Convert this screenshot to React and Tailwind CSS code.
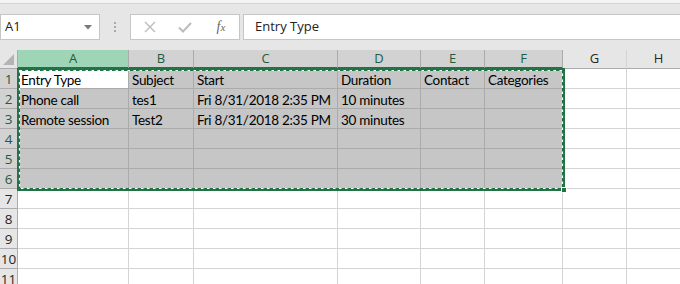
import React from 'react';

const cols = [
  { key: 'A', w: 'w-[111px]', sel: true },
  { key: 'B', w: 'w-[65px]', sel: true },
  { key: 'C', w: 'w-[144px]', sel: true },
  { key: 'D', w: 'w-[83px]', sel: true },
  { key: 'E', w: 'w-[64px]', sel: true },
  { key: 'F', w: 'w-[78px]', sel: true },
  { key: 'G', w: 'w-[64px]', sel: false },
  { key: 'H', w: 'w-[64px]', sel: false },
];

const data = [
  ['Entry Type', 'Subject', 'Start', 'Duration', 'Contact', 'Categories'],
  ['Phone call', 'tes1', 'Fri 8/31/2018 2:35 PM', '10 minutes', '', ''],
  ['Remote session', 'Test2', 'Fri 8/31/2018 2:35 PM', '30 minutes', '', ''],
  ['', '', '', '', '', ''],
  ['', '', '', '', '', ''],
  ['', '', '', '', '', ''],
];

const rowNums = [1, 2, 3, 4, 5, 6, 7, 8, 9, 10, 11];

const App = () => {
  return (
    <div className="relative w-[680px] h-[284px] overflow-hidden bg-white" style={{ fontFamily: '"Lato", sans-serif' }}>
      {/* Formula bar area */}
      <div className="h-[50px] bg-[#e6e6e6] relative" style={{ fontFamily: '"Open Sans", sans-serif' }}>
        <div className="h-[4px] bg-[#f3f3f3] border-b border-[#d4d4d4]" />
        <div className="flex items-center mt-[10px] h-[26px]">
          {/* Name box */}
          <div className="w-[100px] shrink-0 h-[26px] bg-white border border-[#c6c6c6] flex items-center justify-between pl-[4px] pr-[7px]">
            <span className="text-[13px] text-[#222]">A1</span>
            <svg width="8" height="5" viewBox="0 0 8 5">
              <path d="M0 0 L8 0 L4 4.5 Z" fill="#7a7a7a" />
            </svg>
          </div>
          {/* Separator dots */}
          <div className="w-[30px] shrink-0 flex flex-col items-center gap-[2px]">
            <div className="w-[2px] h-[2px] bg-[#a8a8a8]" />
            <div className="w-[2px] h-[2px] bg-[#a8a8a8]" />
            <div className="w-[2px] h-[2px] bg-[#a8a8a8]" />
          </div>
          {/* Buttons */}
          <div className="w-[110px] shrink-0 h-[26px] bg-white border border-[#c6c6c6] flex items-center">
            <div className="w-[36px] flex justify-center pl-[2px]">
              <svg width="12" height="12" viewBox="0 0 12 12">
                <path d="M1 1 L11 11 M11 1 L1 11" stroke="#bcbcbc" strokeWidth="1.4" />
              </svg>
            </div>
            <div className="w-[36px] flex justify-center">
              <svg width="14" height="11" viewBox="0 0 14 11">
                <path d="M1 5.5 L5 9.5 L13 1" stroke="#bcbcbc" strokeWidth="2" fill="none" />
              </svg>
            </div>
            <div className="w-[36px] flex justify-center">
              <span className="italic text-[14px] text-[#666] leading-none" style={{ fontFamily: '"Liberation Serif", serif' }}>
                f<span className="text-[11px]">x</span>
              </span>
            </div>
          </div>
          {/* Formula box */}
          <div className="ml-[3px] flex-1 h-[26px] bg-white border border-r-0 border-[#c6c6c6] flex items-center pl-[11px]">
            <span className="text-[13px] text-[#222]">Entry Type</span>
          </div>
        </div>
      </div>

      {/* Column headers */}
      <div className="flex h-[19px]" style={{ fontFamily: '"Open Sans", sans-serif' }}>
        <div className="w-[18px] shrink-0 h-[19px] bg-[#e6e6e6] border-r border-b border-[#ababab] relative">
          <svg className="absolute right-[3px] bottom-[3px]" width="11" height="11" viewBox="0 0 11 11">
            <path d="M11 0 L11 11 L0 11 Z" fill="#b4b4b4" />
          </svg>
        </div>
        {cols.map((c) => (
          <div
            key={c.key}
            className={`${c.w} shrink-0 h-[19px] flex items-center justify-center text-[13px] border-r ${
              c.key === 'A'
                ? 'bg-[#9fd5b7] text-[#1f5c3e] border-b-2 border-r-[#ababab] border-b-[#217346]'
                : c.sel
                ? 'bg-[#d2d2d2] text-[#1f5c3e] border-b-2 border-r-[#ababab] border-b-[#217346]'
                : 'bg-[#e6e6e6] text-[#262626] border-b border-r-[#d4d4d4] border-b-[#ababab]'
            }`}
          >
            {c.key}
          </div>
        ))}
      </div>

      {/* Rows */}
      {rowNums.map((n) => {
        const inSel = n <= 6;
        return (
          <div key={n} className="flex h-[20px]">
            <div
              className={`w-[18px] shrink-0 h-[20px] flex items-center justify-center pt-[2px] text-[13.5px] border-r border-b ${
                inSel
                  ? 'bg-[#d2d2d2] text-[#1f5c3e] border-r-[#217346] border-b-[#ababab]'
                  : 'bg-[#e6e6e6] text-[#262626] border-r-[#ababab] border-b-[#ababab]'
              }`}
              style={{ fontFamily: '"Open Sans", sans-serif' }}
            >
              {n}
            </div>
            {cols.map((c, ci) => {
              const cellSel = inSel && c.sel;
              const active = n === 1 && ci === 0;
              const text = inSel && c.sel ? data[n - 1][ci] : '';
              return (
                <div
                  key={c.key}
                  className={`${c.w} shrink-0 h-[20px] flex items-center pl-[3px] pt-[3px] text-[13.5px] tracking-[-0.3px] text-black whitespace-nowrap overflow-hidden border-r border-b ${
                    active
                      ? 'bg-white border-[#ababab]'
                      : cellSel
                      ? 'bg-[#c6c6c6] border-[#ababab]'
                      : 'bg-white border-[#d4d4d4]'
                  }`}
                >
                  {text}
                </div>
              );
            })}
          </div>
        );
      })}

      {/* Copy selection marquee */}
      <div className="absolute left-[17px] top-[68px] w-[548px] h-[123px] border-[3px] border-[#217346] pointer-events-none">
        <svg className="absolute -left-[3px] -top-[3px]" width="548" height="123" viewBox="0 0 548 123">
          <rect x="2.5" y="2.5" width="543" height="118" fill="none" stroke="#ffffff" strokeWidth="1.2" strokeDasharray="2.5 3.5" />
        </svg>
      </div>
      <div className="absolute left-[561px] top-[187px] w-[6px] h-[6px] bg-[#217346] border border-white" />
    </div>
  );
};

export default App;
